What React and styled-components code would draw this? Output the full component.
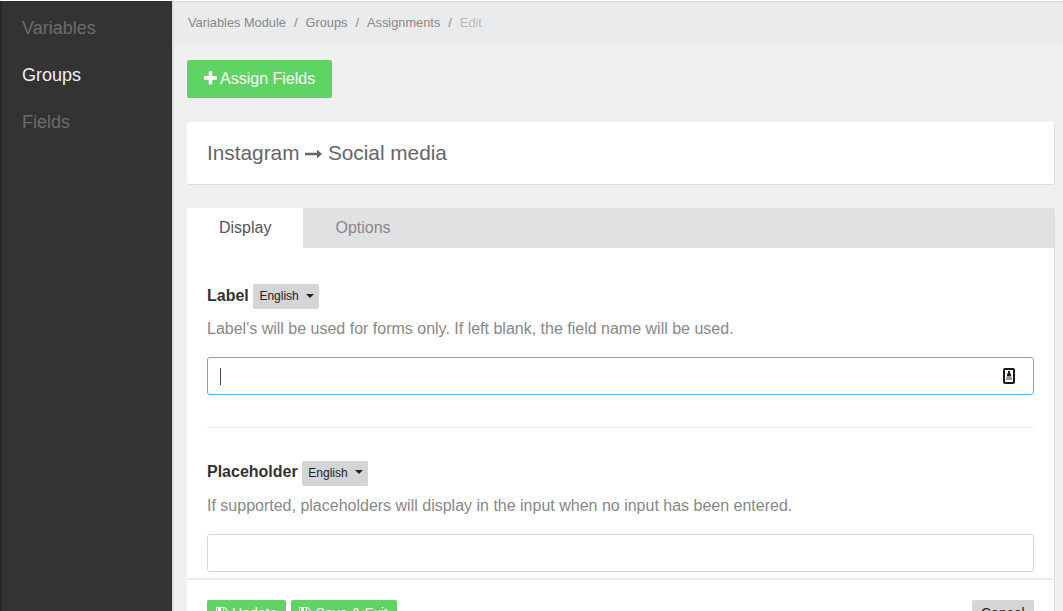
import React from "react";
import styled, { createGlobalStyle } from "styled-components";

const GlobalStyle = createGlobalStyle`
  *, *::before, *::after { box-sizing: border-box; }
  body {
    margin: 0;
    overflow: hidden;
    background: #f0f0f0;
    color: #888;
    font-family: "Liberation Sans", Arial, sans-serif;
    font-size: 16px;
    line-height: 24px;
  }
  button, input { font: inherit; }
`;

const Page = styled.div`
  display: flex;
  height: 611px;
  overflow: hidden;
  border-top: 1px solid #fff;
`;

const Sidebar = styled.nav`
  flex: 0 0 172px;
  padding: 4px 0 0 20px;
  background: #333;
  border-left: 2px solid #262626;
`;

const SidebarLink = styled.a`
  display: block;
  height: 47px;
  line-height: 47px;
  font-size: 18px;
  color: ${(p) => (p.$active ? "#f0f0f0" : "#6b6c6c")};
`;

const Main = styled.main`
  flex: 1;
  min-width: 0;
  display: flex;
  flex-direction: column;
  border-left: 2px solid #dedede;
`;

const Breadcrumb = styled.div`
  flex: none;
  display: flex;
  height: 43px;
  padding-left: 14px;
  background: #eaebed;
  box-shadow: inset 0 1px 0 #d9dbdd;
  font-size: 12.8px;
  line-height: 43px;
`;

const Crumb = styled.span`
  color: ${(p) => (p.$current ? "#bbb" : "#888")};
  &:not(:first-child)::before {
    content: "/";
    padding: 0 8px;
    color: #888;
  }
`;

const Content = styled.div`
  flex: 1;
  min-height: 0;
  display: flex;
  flex-direction: column;
  align-items: stretch;
  padding: 16px 9px 0 13px;
`;

const AssignButton = styled.button`
  flex: none;
  align-self: flex-start;
  display: flex;
  align-items: center;
  gap: 3px;
  width: 145px;
  height: 38px;
  padding: 0 0 0 17px;
  border: 0;
  border-radius: 2px;
  background: #5fd364;
  color: #fff;
  white-space: nowrap;
  svg { margin-top: -1px; }
`;

const Icon = styled.svg`
  flex: none;
  display: block;
  fill: currentColor;
`;

const TitleCard = styled.header`
  flex: none;
  display: flex;
  align-items: center;
  height: 62px;
  margin: 24px 0;
  padding: 0 20px;
  border-radius: 2px;
  background: #fff;
  box-shadow: 1px 1px 0 #dcdddd;
  color: #666;
  font-size: 20.8px;
  svg { margin: 2px 5.4px 0 6px; }
`;

const Panel = styled.section`
  flex: 1;
  min-height: 0;
  display: flex;
  flex-direction: column;
  background: #fff;
  box-shadow: 1px 1px 0 #dcdddd;
`;

const Tabs = styled.div`
  flex: none;
  display: flex;
  height: 40px;
  background: #e0e1e3;
`;

const Tab = styled.a`
  padding: 0 32px;
  line-height: 39px;
  background: ${(p) => (p.$active ? "#fff" : "transparent")};
  color: ${(p) => (p.$active ? "#555" : "#888")};
`;

const Fields = styled.div`
  flex: 1;
  min-height: 0;
  padding: 36px 20px 0;
`;

const Field = styled.div`
  & + & {
    margin-top: 32px;
    padding-top: 33px;
    border-top: 1px solid #ececec;
  }
`;

const LabelRow = styled.div`
  display: flex;
  align-items: flex-start;
  gap: 4px;
  height: 25px;
`;

const Label = styled.label`
  color: #333;
  font-weight: bold;
  line-height: ${(p) => p.$lineHeight || 24}px;
`;

const LanguageButton = styled.button`
  display: flex;
  align-items: center;
  gap: 7px;
  width: 66px;
  height: 25px;
  padding: 0 5px 1px 6.6px;
  border: 0;
  border-radius: 2px;
  background: #d4d5d7;
  color: #222;
  font-size: 12px;
  line-height: 24px;
  &::after {
    content: "";
    margin-bottom: ${(p) => p.$caretLift || 1}px;
    border: solid transparent;
    border-width: 3.6px 3.6px 0;
    border-width: 4px 4px 0;
    border-top-color: #222;
  }
`;

const Instructions = styled.p`
  margin: 8px 0 16px;
  line-height: 24px;
`;

const InputBox = styled.div`
  display: flex;
  align-items: center;
  justify-content: space-between;
  height: 38px;
  padding: 0 18px 0 12px;
  border: 1px solid ${(p) => (p.$focused ? "#45b8ee" : "#d5d6d7")};
  border-radius: 3px;
  background: #fff;
`;

const Caret = styled.span`
  width: 1px;
  height: 17px;
  background: #444;
`;

const Actions = styled.footer`
  flex: none;
  display: flex;
  gap: 5px;
  height: 31px;
  padding: 20px 20px 0;
  background: #fff;
  box-shadow: 0 -1px 3px rgba(0, 0, 0, 0.16);
  clip-path: inset(-4px 0 0 0);
`;

const ActionButton = styled.button`
  flex: none;
  display: flex;
  align-items: center;
  gap: 4px;
  width: ${(p) => p.$width}px;
  height: 25px;
  margin-left: ${(p) => (p.$end ? "auto" : 0)};
  padding: 0 ${(p) => p.$inset || 9}px;
  border: 0;
  border-radius: 2px;
  background: ${(p) => (p.$end ? "#d4d5d7" : "#5fd364")};
  color: ${(p) => (p.$end ? "#222" : "#fff")};
  font-size: 14px;
  line-height: 24px;
  white-space: nowrap;
`;

const PlusIcon = () => (
  <Icon width="13" height="17" viewBox="192 0 1408 1792" preserveAspectRatio="none">
    <path d="M1600 736v192q0 40-28 68t-68 28h-416v416q0 40-28 68t-68 28h-192q-40 0-68-28t-28-68v-416h-416q-40 0-68-28t-28-68v-192q0-40 28-68t68-28h416v-416q0-40 28-68t68-28h192q40 0 68 28t28 68v416h416q40 0 68 28t28 68z" />
  </Icon>
);

const ArrowIcon = () => (
  <Icon width="17" height="8" viewBox="0 0 17 8">
    <path d="M0 2.700h12V.3q0-.5.5-.2l4.200 3.600q.3.3 0 .6l-4.200 3.600q-.5.3-.5-.2V5.300H0z" />
  </Icon>
);

const SaveIcon = () => (
  <Icon width="12" height="14" viewBox="128 0 1536 1792">
    <path d="M512 1536h768v-384h-768v384zm896 0h128v-896q0-14-10-38.500t-20-34.500l-281-281q-10-10-34-20t-39-10v416q0 40-28 68t-68 28h-576q-40 0-68-28t-28-68v-416h-128v1280h128v-416q0-40 28-68t68-28h832q40 0 68 28t28 68v416zm-384-928v-320q0-13-9.500-22.500t-22.500-9.500h-192q-13 0-22.500 9.500t-9.500 22.500v320q0 13 9.500 22.500t22.500 9.500h192q13 0 22.500-9.500t9.500-22.500zm640 32v928q0 40-28 68t-68 28h-1344q-40 0-68-28t-28-68v-1344q0-40 28-68t68-28h928q40 0 88 20t76 48l280 280q28 28 48 76t20 88z" />
  </Icon>
);

const AutofillIcon = () => (
  <Icon width="12" height="16" viewBox="0 0 12 16">
    <rect x="1" y="1" width="10" height="14" rx="1" fill="#fff" stroke="#1b1b1b" strokeWidth="2" />
    <path d="M5 3h2v2.500h1V8H4V5.500h1z" fill="#222" />
    <path d="M3 9.500q0-1.500 2-1.500h2q2 0 2 1.500V12H3z" fill="#999" />
  </Icon>
);

export default function App() {
  return (
    <>
      <GlobalStyle />
      <Page>
        <Sidebar>
          <SidebarLink>Variables</SidebarLink>
          <SidebarLink $active>Groups</SidebarLink>
          <SidebarLink>Fields</SidebarLink>
        </Sidebar>
        <Main>
          <Breadcrumb>
            <Crumb>Variables Module</Crumb>
            <Crumb>Groups</Crumb>
            <Crumb>Assignments</Crumb>
            <Crumb $current>Edit</Crumb>
          </Breadcrumb>
          <Content>
            <AssignButton><PlusIcon />Assign Fields</AssignButton>
            <TitleCard>Instagram<ArrowIcon />Social media</TitleCard>
            <Panel>
              <Tabs>
                <Tab $active>Display</Tab>
                <Tab>Options</Tab>
              </Tabs>
              <Fields>
                <Field>
                  <LabelRow>
                    <Label>Label</Label>
                    <LanguageButton>English</LanguageButton>
                  </LabelRow>
                  <Instructions>Label's will be used for forms only. If left blank, the field name will be used.</Instructions>
                  <InputBox $focused><Caret /><AutofillIcon /></InputBox>
                </Field>
                <Field>
                  <LabelRow>
                    <Label $lineHeight={22}>Placeholder</Label>
                    <LanguageButton $caretLift={3}>English</LanguageButton>
                  </LabelRow>
                  <Instructions>If supported, placeholders will display in the input when no input has been entered.</Instructions>
                  <InputBox />
                </Field>
              </Fields>
              <Actions>
                <ActionButton $width={79}><SaveIcon />Update</ActionButton>
                <ActionButton $width={106} $inset={8.4}><SaveIcon />Save &amp; Exit</ActionButton>
                <ActionButton $width={62} $end>Cancel</ActionButton>
              </Actions>
            </Panel>
          </Content>
        </Main>
      </Page>
    </>
  );
}
